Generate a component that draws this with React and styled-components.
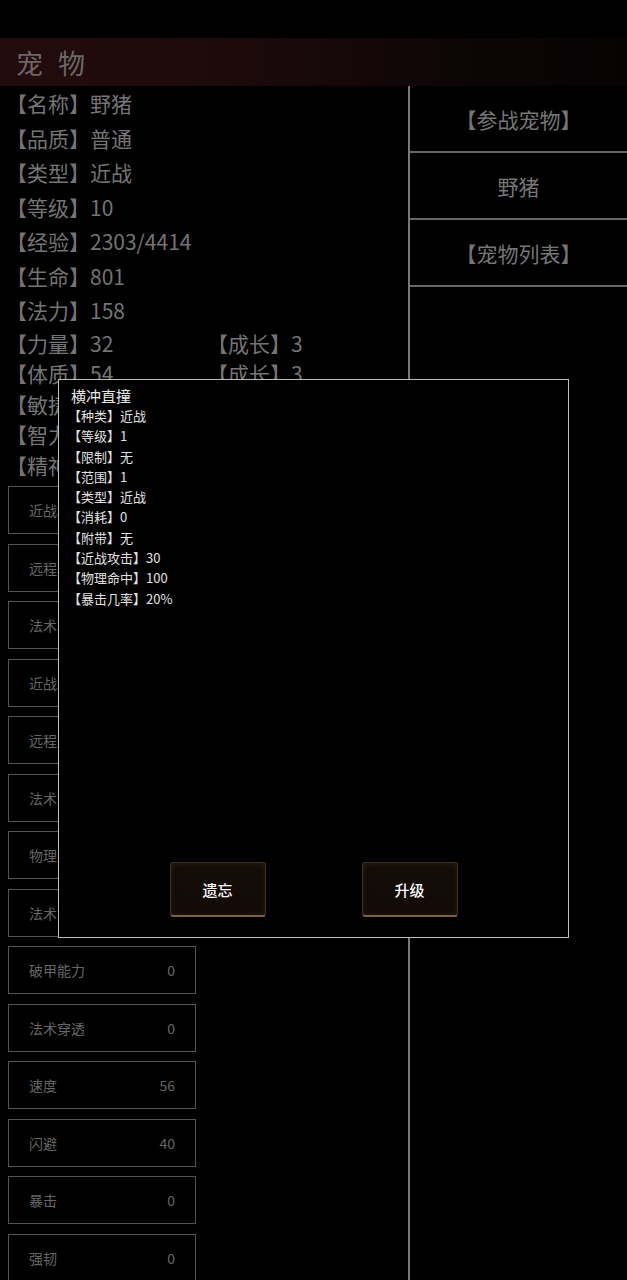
import React from 'react';
import styled, { createGlobalStyle } from 'styled-components';

const GlobalStyle = createGlobalStyle`
  html, body {
    margin: 0;
    padding: 0;
    background: #000;
  }
  body {
    font-family: "Noto Sans CJK SC", "Noto Sans", sans-serif;
  }
`;

const Page = styled.div`
  position: relative;
  width: 627px;
  min-height: 1280px;
  background: #000;
  overflow: hidden;
`;

const TopSpace = styled.div`
  height: 38px;
`;

const Header = styled.div`
  height: 48px;
  display: flex;
  align-items: center;
  padding-left: 16px;
  background: linear-gradient(90deg, #230b0d 0%, #1c0a0b 40%, #0c0506 75%, #070303 100%);
  color: #6e6666;
  font-size: 27px;
  letter-spacing: 15px;
`;

const Main = styled.div`
  display: flex;
  align-items: stretch;
`;

const Left = styled.div`
  width: 408px;
  padding-left: 6px;
  box-sizing: border-box;
`;

const InfoRow = styled.div`
  display: grid;
  grid-template-columns: ${(p) => (p.$split ? '201px 1fr' : '1fr')};
  height: ${(p) => (p.$split ? '30.5px' : '34.5px')};
  line-height: ${(p) => (p.$split ? '30.5px' : '34.5px')};
  font-size: 21px;
  color: #747474;
  white-space: nowrap;
`;

const StatList = styled.div`
  display: flex;
  flex-direction: column;
  gap: 9.5px;
  margin-top: 6px;
  margin-left: 2px;
  padding-bottom: 20px;
`;

const StatBox = styled.div`
  width: 188px;
  height: 48px;
  box-sizing: border-box;
  border: 1px solid #555;
  display: flex;
  align-items: center;
  justify-content: space-between;
  padding: 0 20px 0 20px;
  font-size: 14px;
  color: #666;
`;

const Right = styled.div`
  flex: 1;
  border-left: 2px solid #777;
  min-height: 1194px;
`;

const TabItem = styled.div`
  height: 65px;
  border-bottom: 2.5px solid #666;
  display: flex;
  align-items: center;
  justify-content: center;
  font-size: 21px;
  color: #767676;
`;

const Modal = styled.div`
  position: absolute;
  left: 58px;
  top: 379px;
  width: 511px;
  height: 559px;
  box-sizing: border-box;
  border: 1px solid #bdbdbd;
  background: #000;
  display: flex;
  flex-direction: column;
  padding: 5px 12px 20px 12px;
`;

const ModalBody = styled.div`
  flex: 1;
  color: #e2e2e2;
`;

const ModalTitle = styled.div`
  font-size: 15px;
  line-height: 21px;
  color: #e8e8e8;
`;

const ModalLine = styled.div`
  font-size: 13px;
  line-height: 20.3px;
  margin-left: -3px;
`;

const ButtonRow = styled.div`
  display: flex;
  justify-content: center;
  gap: 96px;
`;

const ActionButton = styled.button`
  width: 96px;
  height: 55px;
  border-radius: 3px;
  border: 1px solid #3f3027;
  border-bottom: 2px solid #7d6147;
  background: linear-gradient(180deg, #150d08 0%, #110a06 100%);
  color: #fff;
  font-family: inherit;
  font-size: 15px;
  font-weight: 500;
  box-shadow: inset 0 0 6px rgba(90, 60, 35, 0.35);
`;

const info = [
  ['【名称】', '野猪'],
  ['【品质】', '普通'],
  ['【类型】', '近战'],
  ['【等级】', '10'],
  ['【经验】', '2303/4414'],
  ['【生命】', '801'],
  ['【法力】', '158'],
];

const attrs = [
  ['【力量】', '32', '3'],
  ['【体质】', '54', '3'],
  ['【敏捷】', '56', '3'],
  ['【智力】', '12', '1'],
  ['【精神】', '18', '2'],
];

const stats = [
  ['近战攻击', '96'],
  ['远程攻击', '0'],
  ['法术攻击', '0'],
  ['近战防御', '54'],
  ['远程防御', '54'],
  ['法术防御', '18'],
  ['物理命中', '100'],
  ['法术命中', '0'],
  ['破甲能力', '0'],
  ['法术穿透', '0'],
  ['速度', '56'],
  ['闪避', '40'],
  ['暴击', '0'],
  ['强韧', '0'],
];

const skill = [
  ['【种类】', '近战'],
  ['【等级】', '1'],
  ['【限制】', '无'],
  ['【范围】', '1'],
  ['【类型】', '近战'],
  ['【消耗】', '0'],
  ['【附带】', '无'],
  ['【近战攻击】', '30'],
  ['【物理命中】', '100'],
  ['【暴击几率】', '20%'],
];

export default function App() {
  return (
    <Page>
      <GlobalStyle />
      <TopSpace />
      <Header>宠物</Header>
      <Main>
        <Left>
          {info.map(([k, v]) => (
            <InfoRow key={k}>
              <span>{k}{v}</span>
            </InfoRow>
          ))}
          {attrs.map(([k, v, g]) => (
            <InfoRow key={k} $split>
              <span>{k}{v}</span>
              <span>【成长】{g}</span>
            </InfoRow>
          ))}
          <StatList>
            {stats.map(([k, v]) => (
              <StatBox key={k}>
                <span>{k}</span>
                <span>{v}</span>
              </StatBox>
            ))}
          </StatList>
        </Left>
        <Right>
          <TabItem>【参战宠物】</TabItem>
          <TabItem>野猪</TabItem>
          <TabItem>【宠物列表】</TabItem>
        </Right>
      </Main>
      <Modal>
        <ModalBody>
          <ModalTitle>横冲直撞</ModalTitle>
          {skill.map(([k, v]) => (
            <ModalLine key={k}>{k}{v}</ModalLine>
          ))}
        </ModalBody>
        <ButtonRow>
          <ActionButton>遗忘</ActionButton>
          <ActionButton>升级</ActionButton>
        </ButtonRow>
      </Modal>
    </Page>
  );
}
